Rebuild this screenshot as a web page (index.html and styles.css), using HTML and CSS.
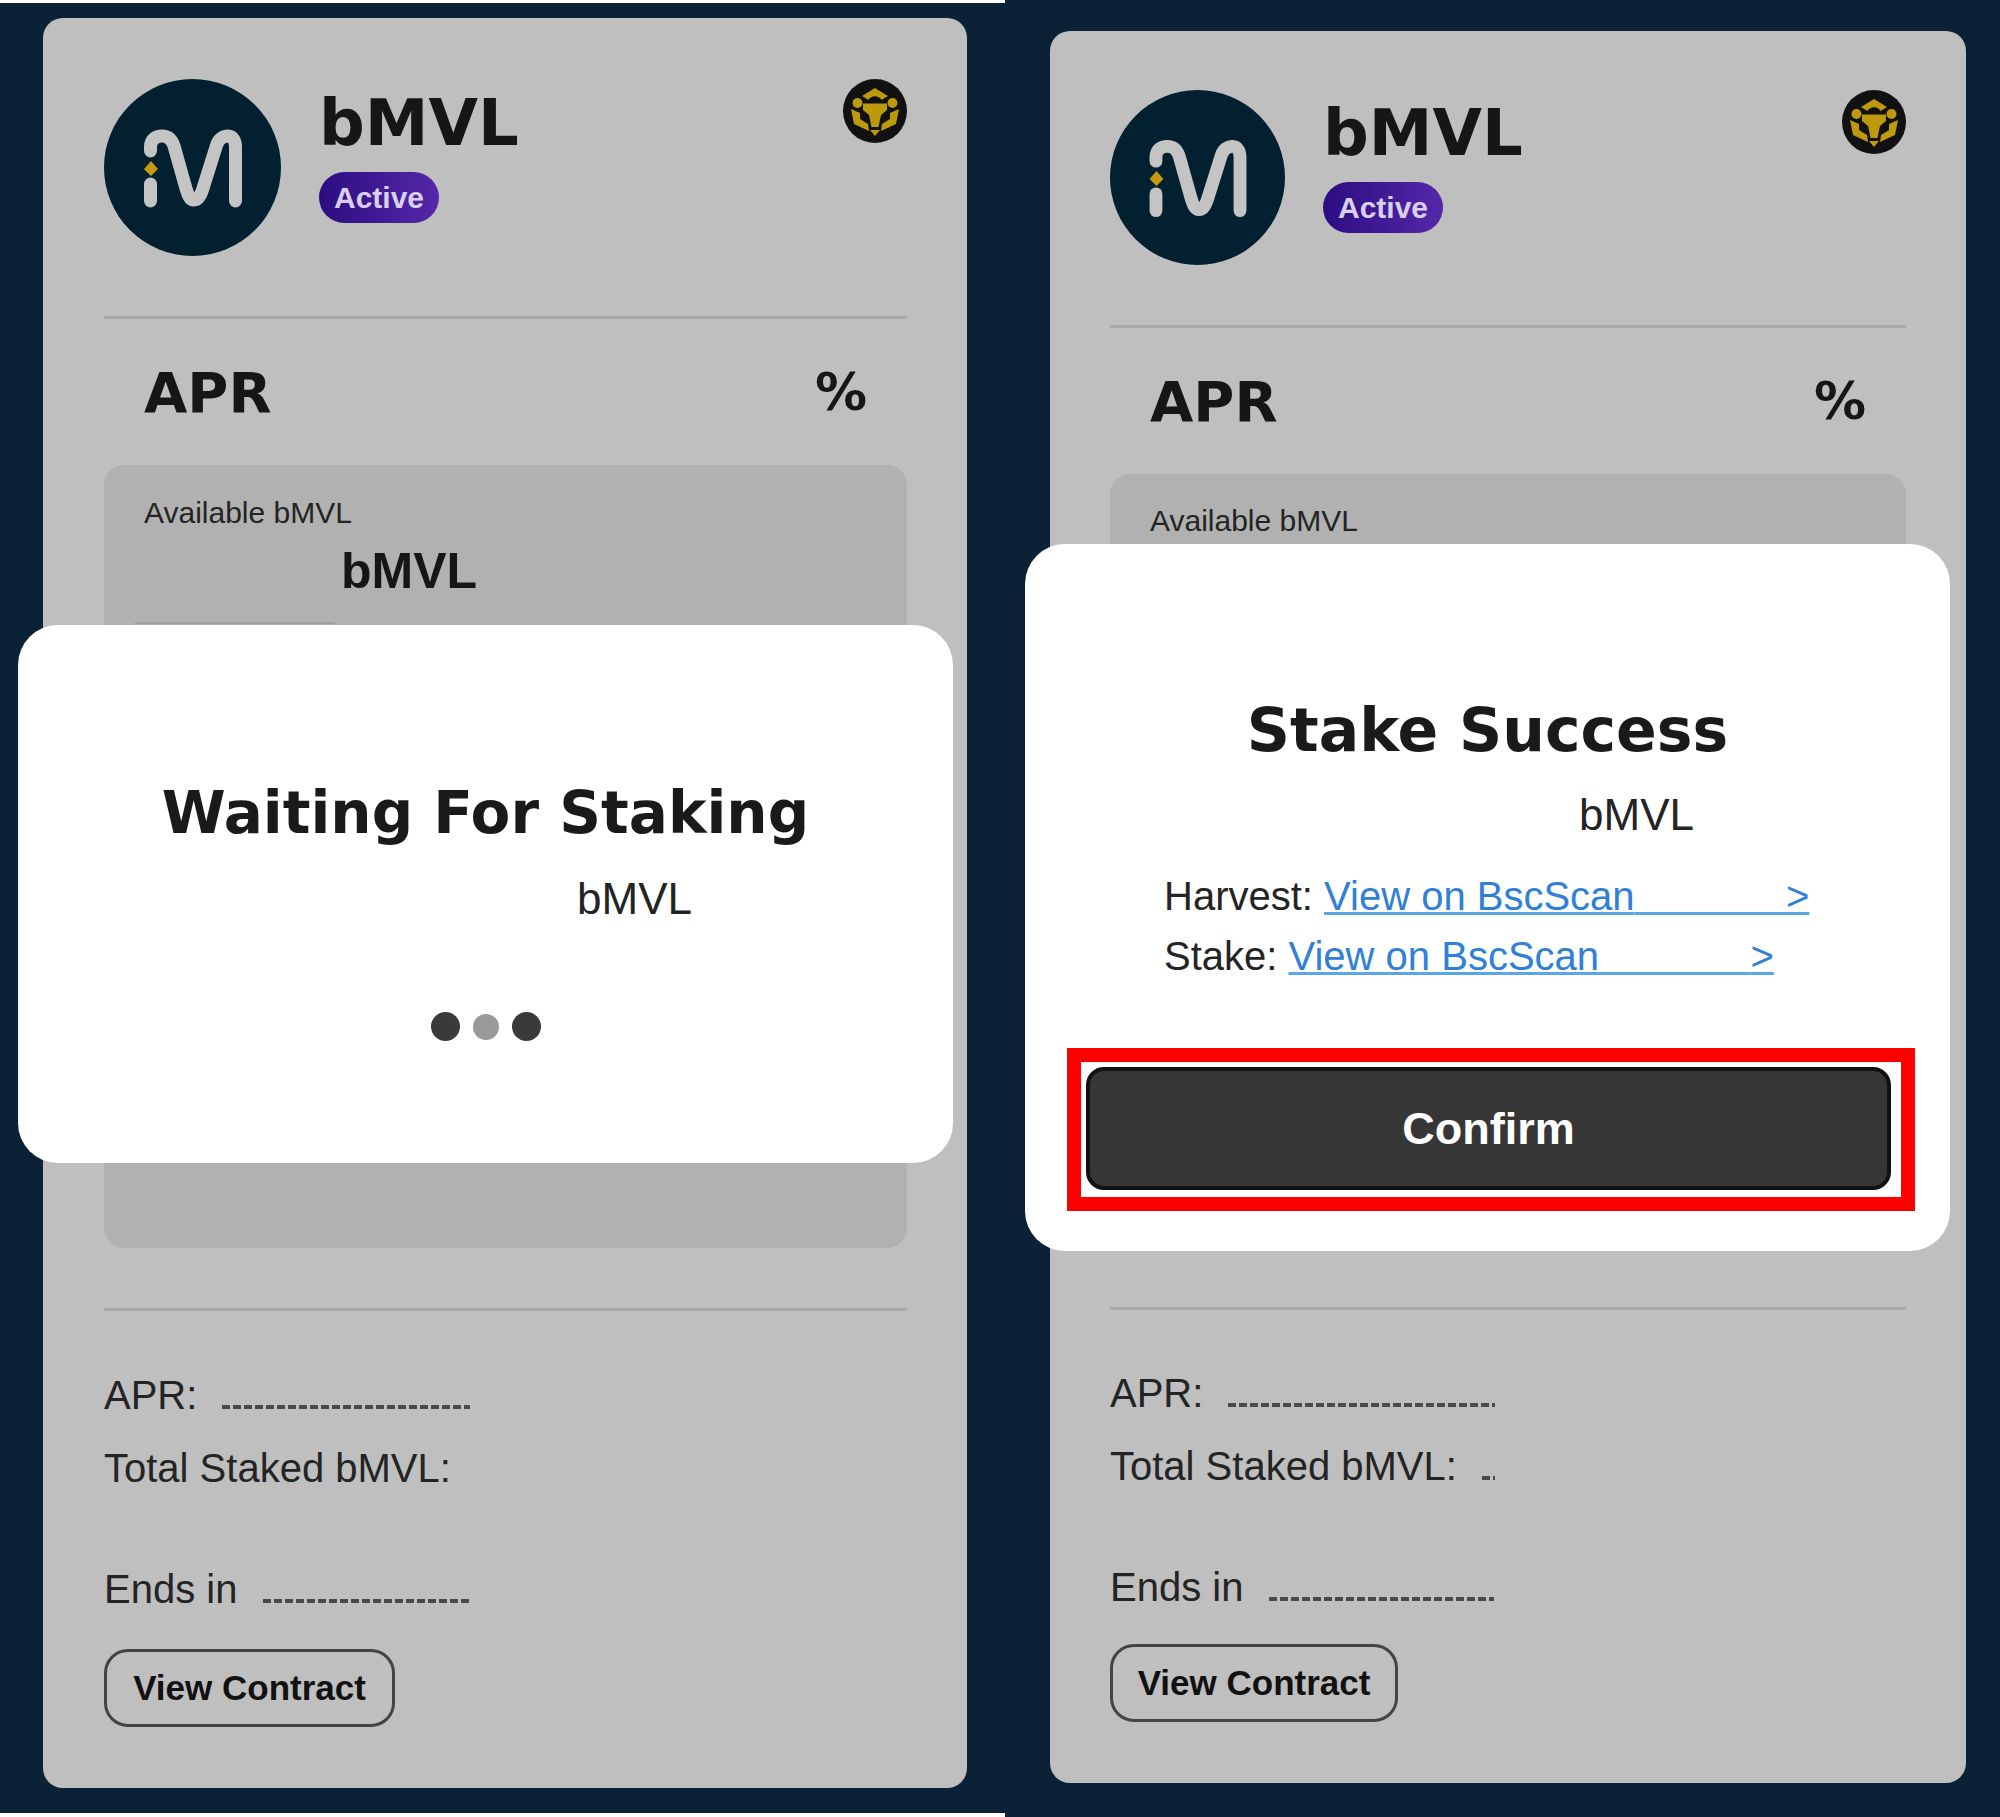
FILE: index.html
```html
<!DOCTYPE html>
<html lang="en">
<head>
  <meta charset="UTF-8" />
  <title>bMVL Staking</title>
  <link rel="stylesheet" href="styles.css">
</head>
<body>
  <div class="shots">

    <section class="panel panel-left">
      <div class="card">
        <div class="head">
          <svg class="logo" viewBox="0 0 177 177">
            <circle cx="88.5" cy="88.5" r="88.5" fill="#02202f"/>
            <path d="M46.5 72V68C46.5 60 52 57 58 57C64 57 68 61 70 67L81 106C84 117 86 121 90 121C94 121 97 117 100 106L112 68C114 60 119 57 124 57C129 57 131.5 62 131.5 68V122" fill="none" stroke="#c4c4c4" stroke-width="13" stroke-linecap="round"/>
            <path d="M46.5 105V122" fill="none" stroke="#c4c4c4" stroke-width="13" stroke-linecap="round"/>
            <path d="M47 82L54 90L47 97L40 90Z" fill="#c79a10"/>
          </svg>
          <div class="head-text">
            <h1 class="token">bMVL</h1>
            <span class="badge">Active</span>
          </div>
          <svg class="coin" viewBox="0 0 64 64">
            <circle cx="32" cy="32" r="32" fill="#111"/>
            <g fill="#bd990c">
              <path d="M19 17L32 9L45 17L38.5 21A7.5 7.5 0 0 0 25.5 21Z"/>
              <circle cx="14.5" cy="24" r="5"/>
              <circle cx="49.5" cy="24" r="5"/>
              <path d="M20 24.5H44V31L38 36L35.5 48H28.5L26 36L20 31Z"/>
              <path d="M8 30L17 34V40L25 45L26 52L11 45Z"/>
              <path d="M56 30L47 34V40L39 45L38 52L53 45Z"/>
              <path d="M27 51H37L32 57Z"/>
            </g>
          </svg>
        </div>
        <div class="rule"></div>
        <div class="apr-row"><span>APR</span><span class="apr-unit">%</span></div>
        <div class="box">
          <div class="box-label">Available bMVL</div>
          <div class="box-value"><span class="blank-value"></span>bMVL</div>
          <div class="box-peek"></div>
        </div>
        <div class="rule rule-low"></div>
        <div class="stats">
          <div class="stat">APR: <span class="dashes dashes-apr"></span></div>
          <div class="stat">Total Staked bMVL:</div>
          <div class="stat stat-ends">Ends in <span class="dashes dashes-ends"></span></div>
        </div>
        <button class="contract-btn">View Contract</button>
      </div>

      <div class="modal modal-wait">
        <h2 class="modal-title">Waiting For Staking</h2>
        <p class="modal-amount"><span class="blank-amount"></span>bMVL</p>
        <div class="loader"><i></i><i class="faint"></i><i></i></div>
      </div>
    </section>

    <section class="panel panel-right">
      <div class="card">
        <div class="head">
          <svg class="logo" viewBox="0 0 177 177">
            <circle cx="88.5" cy="88.5" r="88.5" fill="#02202f"/>
            <path d="M46.5 72V68C46.5 60 52 57 58 57C64 57 68 61 70 67L81 106C84 117 86 121 90 121C94 121 97 117 100 106L112 68C114 60 119 57 124 57C129 57 131.5 62 131.5 68V122" fill="none" stroke="#c4c4c4" stroke-width="13" stroke-linecap="round"/>
            <path d="M46.5 105V122" fill="none" stroke="#c4c4c4" stroke-width="13" stroke-linecap="round"/>
            <path d="M47 82L54 90L47 97L40 90Z" fill="#c79a10"/>
          </svg>
          <div class="head-text">
            <h1 class="token">bMVL</h1>
            <span class="badge">Active</span>
          </div>
          <svg class="coin" viewBox="0 0 64 64">
            <circle cx="32" cy="32" r="32" fill="#111"/>
            <g fill="#bd990c">
              <path d="M19 17L32 9L45 17L38.5 21A7.5 7.5 0 0 0 25.5 21Z"/>
              <circle cx="14.5" cy="24" r="5"/>
              <circle cx="49.5" cy="24" r="5"/>
              <path d="M20 24.5H44V31L38 36L35.5 48H28.5L26 36L20 31Z"/>
              <path d="M8 30L17 34V40L25 45L26 52L11 45Z"/>
              <path d="M56 30L47 34V40L39 45L38 52L53 45Z"/>
              <path d="M27 51H37L32 57Z"/>
            </g>
          </svg>
        </div>
        <div class="rule"></div>
        <div class="apr-row"><span>APR</span><span class="apr-unit">%</span></div>
        <div class="box">
          <div class="box-label">Available bMVL</div>
        </div>
        <div class="rule rule-low"></div>
        <div class="stats">
          <div class="stat">APR: <span class="dashes dashes-apr-wide"></span></div>
          <div class="stat">Total Staked bMVL: <span class="dashes dashes-total"></span></div>
          <div class="stat stat-ends">Ends in <span class="dashes dashes-ends-wide"></span></div>
        </div>
        <button class="contract-btn">View Contract</button>
      </div>

      <div class="modal modal-success">
        <h2 class="modal-title">Stake Success</h2>
        <p class="modal-amount"><span class="blank-amount"></span>bMVL</p>
        <div class="tx-list">
          <div class="tx">Harvest: <a href="#">View on BscScan<span class="tx-gap">&nbsp;&nbsp;&nbsp;&nbsp;&nbsp;&nbsp;&nbsp;&nbsp;&nbsp;&nbsp;&nbsp;&nbsp;&nbsp;&nbsp;</span>&gt;</a></div>
          <div class="tx">Stake: <a href="#">View on BscScan<span class="tx-gap">&nbsp;&nbsp;&nbsp;&nbsp;&nbsp;&nbsp;&nbsp;&nbsp;&nbsp;&nbsp;&nbsp;&nbsp;&nbsp;&nbsp;</span>&gt;</a></div>
        </div>
        <div class="highlight">
          <button class="confirm-btn">Confirm</button>
        </div>
      </div>
    </section>

  </div>
</body>
</html>
```

FILE: styles.css
```css
html, body {
  margin: 0;
  padding: 0;
  background: #fff;
}
body {
  font-family: "Liberation Sans", Arial, sans-serif;
  color: #242424;
}
.shots {
  display: grid;
  grid-template-columns: 1005px 995px;
  width: 2000px;
  height: 1817px;
}
.panel {
  position: relative;
  background: #0b2236;
  display: flex;
  flex-direction: column;
}
.panel-left {
  margin: 3px 0 4px;
  padding: 15px 38px 25px 43px;
}
.panel-right {
  padding: 31px 34px 34px 45px;
}
.card {
  flex: 1;
  display: flex;
  flex-direction: column;
  background: #bfbfbf;
  border-radius: 20px;
  padding: 61px 60px 61px 61px;
}
.panel-right .card {
  padding: 59px 60px 61px 60px;
}

/* header */
.head {
  display: flex;
  align-items: flex-start;
}
.logo {
  width: 177px;
  height: 177px;
  flex: none;
}
.panel-right .logo {
  width: 175px;
  height: 175px;
}
.head-text {
  margin-left: 38px;
}
.token {
  margin: 6px 0 0;
  font: bold 64px/76px "DejaVu Sans", sans-serif;
  color: #161616;
}
.panel-right .token {
  margin-top: 5px;
}
.badge {
  display: inline-block;
  margin-top: 11px;
  padding: 0 15px;
  height: 51px;
  line-height: 51px;
  border-radius: 26px;
  font-size: 30px;
  font-weight: bold;
  color: #d9cff0;
  background: linear-gradient(90deg, #2c0d80, #5528a9);
}
.coin {
  width: 64px;
  height: 64px;
  margin-left: auto;
  flex: none;
}
.rule {
  height: 3px;
  margin-top: 60px;
  background: #a8a8a8;
  flex: none;
}
.apr-row {
  display: flex;
  justify-content: space-between;
  align-items: center;
  height: 146px;
  padding: 0 40px;
  font: bold 56px "DejaVu Sans", sans-serif;
  color: #161616;
  flex: none;
}
.apr-unit {
  font-size: 52px;
}

/* balance box */
.box {
  flex: 1;
  background: #b1b1b1;
  border-radius: 20px;
  padding: 28px 40px;
}
.panel-left .box {
  padding-top: 29px;
}
.box-label {
  font-size: 30px;
  line-height: 38px;
}
.box-value {
  font-size: 50px;
  font-weight: bold;
  line-height: 62px;
  margin-top: 8px;
  color: #161616;
}
.blank-value {
  display: inline-block;
  width: 197px;
}
.box-peek {
  width: 200px;
  height: 2px;
  margin: 20px 0 0 -9px;
  background: #a0a0a0;
}
.rule-low {
  margin-top: 60px;
}

/* stats */
.stats {
  margin-top: 48px;
}
.stat {
  font-size: 40px;
  line-height: 73px;
  white-space: nowrap;
}
.stat-ends {
  margin-top: 48px;
}
.dashes {
  display: inline-block;
  height: 4px;
  margin-left: 14px;
  background: repeating-linear-gradient(90deg, #4a4a4a 0 8px, transparent 8px 11px);
}
.dashes-apr { width: 248px; }
.dashes-ends { width: 206px; }
.dashes-apr-wide { width: 267px; }
.dashes-total { width: 13px; }
.dashes-ends-wide { width: 225px; }
.contract-btn {
  align-self: flex-start;
  margin-top: 23px;
  height: 78px;
  width: 291px;
  padding: 0;
  font: bold 35px "Liberation Sans", sans-serif;
  color: #111;
  background: transparent;
  border: 3px solid #444;
  border-radius: 24px;
}
.panel-right .stats {
  margin-top: 47px;
}
.panel-right .contract-btn {
  width: 288px;
  margin-top: 20px;
}

/* modals */
.modal {
  position: absolute;
  box-sizing: border-box;
  display: flex;
  flex-direction: column;
  align-items: center;
  background: #fff;
  border-radius: 40px;
}
.modal-wait {
  left: 18px;
  top: 622px;
  width: 935px;
  height: 538px;
  padding-top: 150px;
}
.modal-success {
  left: 20px;
  top: 544px;
  width: 925px;
  height: 707px;
  padding-top: 148px;
}
.modal-title {
  margin: 0;
  font: bold 58px/76px "DejaVu Sans", sans-serif;
  color: #1a1a1a;
}
.modal-success .modal-title {
  font-size: 60px;
}
.modal-amount {
  margin: 21px 0 0;
  font-size: 44px;
  line-height: 54px;
}
.modal-success .modal-amount {
  margin-top: 20px;
}
.blank-amount {
  display: inline-block;
  width: 298px;
}
.loader {
  display: flex;
  align-items: center;
  gap: 13px;
  margin-top: 86px;
}
.loader i {
  width: 29px;
  height: 29px;
  border-radius: 50%;
  background: #3a3a3a;
}
.loader i.faint {
  width: 26px;
  height: 26px;
  background: #999;
}
.tx-list {
  align-self: stretch;
  margin-top: 24px;
  padding-left: 139px;
}
.tx {
  font-size: 40px;
  line-height: 60px;
  white-space: nowrap;
}
.tx a {
  color: #2f80d6;
  text-decoration: underline 3px #5aa7e6;
}
.tx-gap {
  letter-spacing: -0.3px;
}
.highlight {
  box-sizing: border-box;
  align-self: flex-start;
  width: 848px;
  height: 163px;
  margin: 62px 0 0 42px;
  padding: 5px 10px 7px 5px;
  border: 14px solid #f00;
}
.confirm-btn {
  display: block;
  width: 100%;
  height: 100%;
  padding: 0;
  font: bold 45px "Liberation Sans", sans-serif;
  color: #fff;
  background: #363636;
  border: 4px solid #111;
  border-radius: 18px;
}
```
